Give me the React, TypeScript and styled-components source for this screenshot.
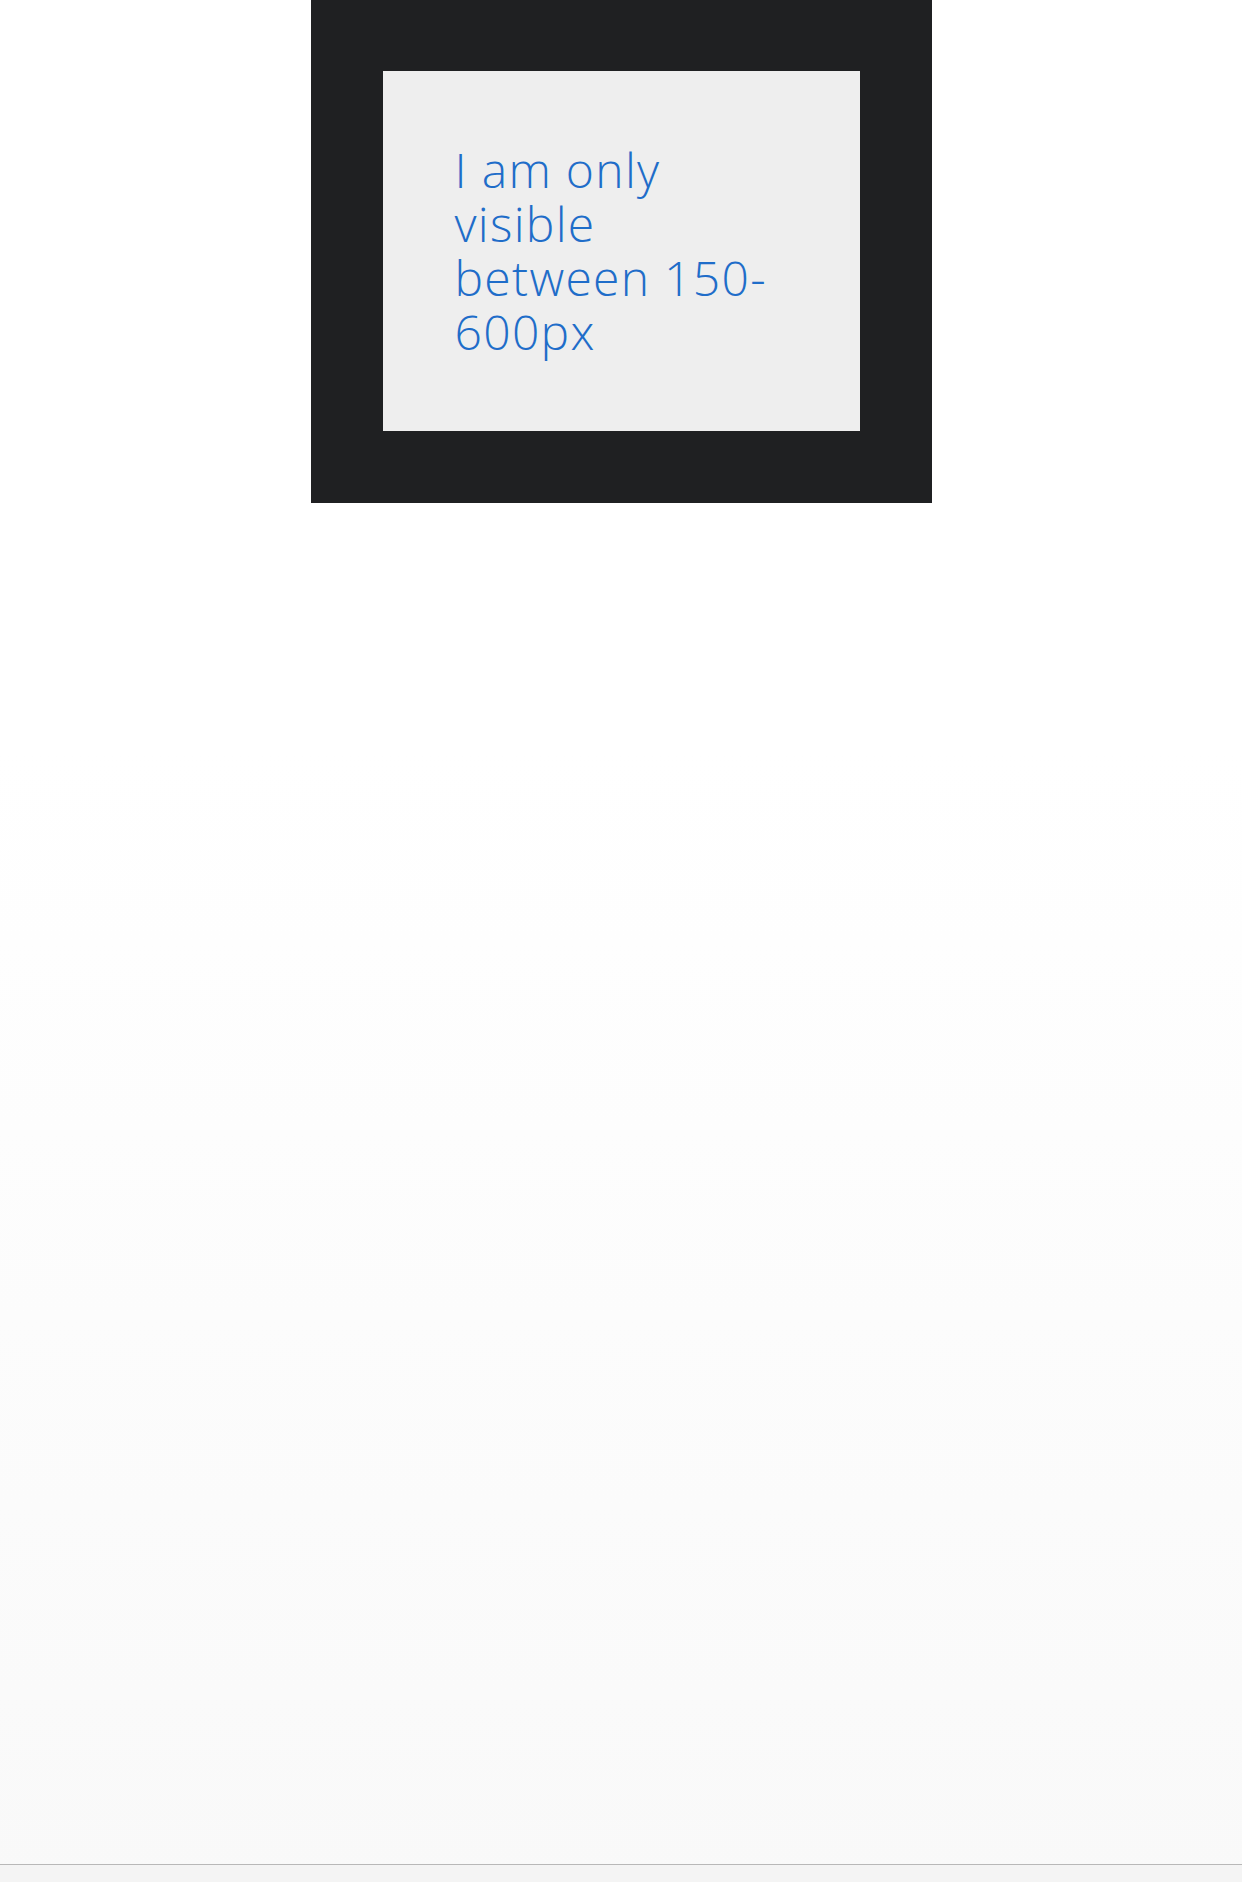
import React from "react";
import styled, { createGlobalStyle } from "styled-components";

const Global = createGlobalStyle`
  html, body { margin: 0; padding: 0; }
  body {
    background: linear-gradient(#ffffff 0%, #ffffff 40%, #f9f9f9 100%);
    font-family: "Open Sans", Lato, sans-serif;
  }
`;

const Page = styled.div`
  min-height: 100vh;
  display: flex;
  flex-direction: column;
`;

const Main = styled.main`
  flex: 1;
  display: flex;
  justify-content: center;
  align-items: flex-start;
`;

const Frame = styled.section`
  width: 50%;
  box-sizing: border-box;
  background: #1f2022;
  padding: 71px 72px 72px;
`;

const Card = styled.div`
  background: #eeeeee;
  padding: 72px 72px;
  box-sizing: border-box;
`;

const Message = styled.p`
  margin: 0;
  font-family: "Open Sans", Lato, sans-serif;
  font-weight: 300;
  font-size: 48px;
  line-height: 54px;
  letter-spacing: 1.3px;
  color: #1f6dc9;
`;

const Footer = styled.footer`
  height: 17px;
  border-top: 1px solid #b8b8b8;
  background: #f4f4f4;
`;

export default function App() {
  return (
    <Page>
      <Global />
      <Main>
        <Frame>
          <Card>
            <Message>I am only visible between 150-600px</Message>
          </Card>
        </Frame>
      </Main>
      <Footer />
    </Page>
  );
}
